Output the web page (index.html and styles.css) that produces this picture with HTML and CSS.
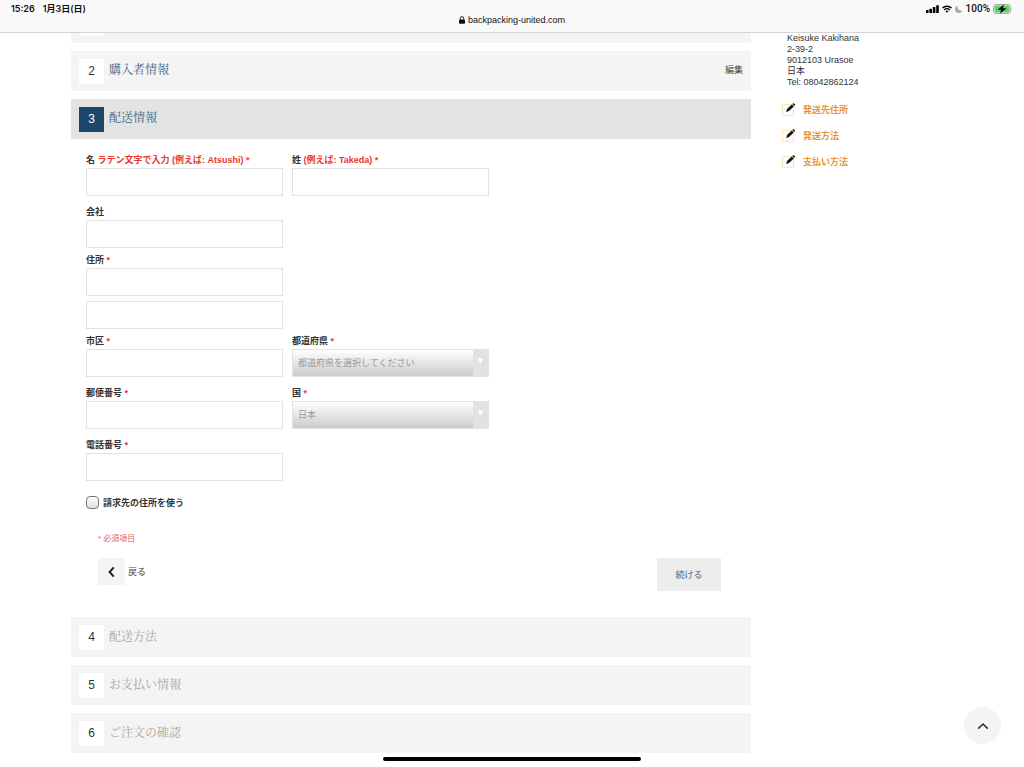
FILE: index.html
```html
<!DOCTYPE html>
<html lang="ja">
<head>
    <meta charset="UTF-8">
    <meta name="viewport" content="width=device-width, initial-scale=1">
    <title>backpacking-united.com</title>
    <link rel="stylesheet" href="styles.css">
</head>
<body>
    <header class="browser-bar">
        <div class="status-left">
            <span>15:26</span>
            <span>1月3日(日)</span>
        </div>
        <div class="address">
            <svg width="6" height="8" viewBox="0 0 6 8"><rect x="0" y="3.4" width="6" height="4.4" rx="0.8" fill="#111"/><path d="M1.3 3.8V2.3a1.7 1.7 0 0 1 3.4 0v1.5" fill="none" stroke="#111" stroke-width="0.9"/></svg>
            <span>backpacking-united.com</span>
        </div>
        <div class="status-right">
            <svg width="13" height="8" viewBox="0 0 13 8" fill="#000"><rect x="0" y="5" width="2.6" height="3" rx="0.6"/><rect x="3.4" y="3.7" width="2.6" height="4.3" rx="0.6"/><rect x="6.8" y="2" width="2.6" height="6" rx="0.6"/><rect x="10.2" y="0.2" width="2.6" height="7.8" rx="0.6"/></svg>
            <svg width="10" height="8" viewBox="0 0 10 8" fill="none" stroke="#000" stroke-width="1.4"><path d="M0.5 3.1a6.4 6.4 0 0 1 9 0M2.2 4.9a4 4 0 0 1 5.6 0"/><path d="M5 7.8 3.5 6.2a2.2 2.2 0 0 1 3 0z" fill="#000" stroke="none"/></svg>
            <svg width="8" height="8" viewBox="0 0 8 8"><path d="M2.6 0.6A3.8 3.8 0 1 0 7.4 5.4 3.9 3.9 0 0 1 2.6 0.6z" fill="#aaa"/></svg>
            <span>100%</span>
            <svg width="20" height="10" viewBox="0 0 20 10"><rect x="0.5" y="0.5" width="17" height="9" rx="2.6" fill="#e8e8e8" stroke="#aaa"/><rect x="1.6" y="1.6" width="14.8" height="6.8" rx="1.6" fill="#5fd068"/><path d="M18.6 3.4q1.2 1.6 0 3.2z" fill="#aaa"/><path d="M11 0.4 4.6 5.8h3.6L7 9.6l6.6-5.4H9.8z" fill="#000"/></svg>
        </div>
    </header>

    <main class="page">
        <div class="checkout">
            <section class="step">
                <span class="step-number">1</span>
            </section>
            <section class="step done">
                <span class="step-number">2</span>
                <h2>購入者情報</h2>
                <a href="#" class="edit">編集</a>
            </section>
            <section class="step active">
                <span class="step-number">3</span>
                <h2>配送情報</h2>
            </section>

            <form class="shipping">
                <div class="fields">
                    <div class="row">
                        <div class="field">
                            <label for="firstname">名 <em>ラテン文字で入力 (例えば: Atsushi) *</em></label>
                            <input type="text" id="firstname">
                        </div>
                        <div class="field">
                            <label for="lastname">姓 <em>(例えば: Takeda) *</em></label>
                            <input type="text" id="lastname">
                        </div>
                    </div>
                    <div class="row tight">
                        <div class="field">
                            <label for="company">会社</label>
                            <input type="text" id="company">
                        </div>
                    </div>
                    <div class="row tight">
                        <div class="field">
                            <label for="street1">住所 <em>*</em></label>
                            <input type="text" id="street1">
                            <input type="text" id="street2" class="second-line" aria-label="住所 2">
                        </div>
                    </div>
                    <div class="row">
                        <div class="field">
                            <label for="city">市区 <em>*</em></label>
                            <input type="text" id="city">
                        </div>
                        <div class="field">
                            <label for="region">都道府県 <em>*</em></label>
                            <div class="select">
                                <select id="region">
                                    <option>都道府県を選択してください</option>
                                </select>
                            </div>
                        </div>
                    </div>
                    <div class="row">
                        <div class="field">
                            <label for="postcode">郵便番号 <em>*</em></label>
                            <input type="text" id="postcode">
                        </div>
                        <div class="field">
                            <label for="country">国 <em>*</em></label>
                            <div class="select">
                                <select id="country">
                                    <option>日本</option>
                                </select>
                            </div>
                        </div>
                    </div>
                    <div class="row">
                        <div class="field">
                            <label for="telephone">電話番号 <em>*</em></label>
                            <input type="text" id="telephone">
                        </div>
                    </div>
                    <div class="same-address">
                        <input type="checkbox" id="same">
                        <label for="same">請求先の住所を使う</label>
                    </div>
                </div>

                <div class="form-footer">
                    <p class="required">* 必須項目</p>
                    <div class="buttons">
                        <a href="#" class="back">
                            <span class="back-icon"><svg width="8" height="12" viewBox="0 0 8 12"><path d="M5.8 1.4 1.6 6l4.2 4.6" fill="none" stroke="#222" stroke-width="2"/></svg></span>
                            戻る
                        </a>
                        <button type="button" class="continue">続ける</button>
                    </div>
                </div>
            </form>

            <section class="step">
                <span class="step-number">4</span>
                <h2>配送方法</h2>
            </section>
            <section class="step">
                <span class="step-number">5</span>
                <h2>お支払い情報</h2>
            </section>
            <section class="step">
                <span class="step-number">6</span>
                <h2>ご注文の確認</h2>
            </section>
        </div>

        <aside class="progress">
            <address>
                Keisuke Kakihana<br>
                2-39-2<br>
                9012103 Urasoe<br>
                日本<br>
                Tel: 08042862124
            </address>
            <ul>
                <li><a href="#"><svg width="14" height="14" viewBox="0 0 14 14"><rect x="0.5" y="1.5" width="11" height="11" fill="#fffdf8" stroke="#fae3c0"/><path d="M4.2 8.9 5 6 9.8 1.4 11.8 3.4 7 8z" fill="#111"/><path d="M10.4 0.9 11.4 0 13.2 1.8 12.3 2.9z" fill="#111"/></svg>発送先住所</a></li>
                <li><a href="#"><svg width="14" height="14" viewBox="0 0 14 14"><rect x="0.5" y="1.5" width="11" height="11" fill="#fffdf8" stroke="#fae3c0"/><path d="M4.2 8.9 5 6 9.8 1.4 11.8 3.4 7 8z" fill="#111"/><path d="M10.4 0.9 11.4 0 13.2 1.8 12.3 2.9z" fill="#111"/></svg>発送方法</a></li>
                <li><a href="#"><svg width="14" height="14" viewBox="0 0 14 14"><rect x="0.5" y="1.5" width="11" height="11" fill="#fffdf8" stroke="#fae3c0"/><path d="M4.2 8.9 5 6 9.8 1.4 11.8 3.4 7 8z" fill="#111"/><path d="M10.4 0.9 11.4 0 13.2 1.8 12.3 2.9z" fill="#111"/></svg>支払い方法</a></li>
            </ul>
        </aside>
    </main>

    <button type="button" class="to-top" aria-label="上へ">
        <svg width="12" height="8" viewBox="0 0 12 8"><path d="M1.2 6.6 6 2l4.8 4.6" fill="none" stroke="#333" stroke-width="1.6"/></svg>
    </button>
    <div class="home-indicator"></div>
</body>
</html>
```
FILE: styles.css
```css
* {
    box-sizing: border-box;
}

body {
    margin: 0;
    background-color: #fff;
    color: #333;
    font-family: "Liberation Sans", "Noto Sans CJK JP", sans-serif;
    font-size: 9px;
}

a {
    color: inherit;
    text-decoration: none;
}

svg {
    display: block;
    flex: none;
}

/* Browser bar */
.browser-bar {
    position: fixed;
    top: 0;
    left: 0;
    right: 0;
    z-index: 10;
    height: 33px;
    padding: 0 11px;
    display: grid;
    grid-template-columns: 1fr auto 1fr;
    background-color: #f9f9f9;
    border-bottom: 1px solid #d4d4d4;
    color: #111;
    font-family: Inter, "Noto Sans CJK JP", sans-serif;
    line-height: 12px;
}

.status-left,
.status-right {
    display: flex;
    align-items: center;
    align-self: start;
    padding-top: 3px;
    height: 15px;
    font-weight: 600;
}

.status-left {
    gap: 8px;
}

.status-right {
    justify-content: flex-end;
    gap: 3px;
    font-family: Roboto, sans-serif;
    font-size: 10px;
    font-weight: 500;
}

.address {
    display: flex;
    align-items: center;
    align-self: start;
    gap: 3px;
    padding-top: 14px;
    font-family: "Liberation Sans", sans-serif;
}

/* Page */
.page {
    display: grid;
    grid-template-columns: 1fr 171px;
    gap: 31px;
    padding: 3px 71px 0;
}

.step {
    display: flex;
    align-items: center;
    gap: 5px;
    height: 40px;
    margin-bottom: 8px;
    padding: 0 8px;
    background-color: #f4f4f4;
}

.step-number {
    width: 25px;
    height: 25px;
    background-color: #fff;
    font-size: 12px;
    line-height: 25px;
    text-align: center;
}

.step h2 {
    margin: 0;
    padding-bottom: 3px;
    color: #a6a6a6;
    font-family: "Noto Serif CJK JP", "Noto Sans CJK JP", serif;
    font-size: 12px;
    font-weight: 400;
    line-height: 18px;
}

.step.done h2,
.step.active h2 {
    padding-bottom: 4px;
    color: #41637f;
}

.step.active {
    margin-bottom: 0;
    background-color: #e3e3e3;
}

.step.active .step-number {
    background-color: #1d466b;
    color: #fff;
}

.edit {
    margin-left: auto;
    padding-bottom: 4px;
    color: #444;
}

/* Shipping form */
.fields {
    padding: 13px 15px 0;
}

.row {
    display: grid;
    grid-template-columns: 197px 197px;
    gap: 9px;
    margin-bottom: 8px;
}

.row.tight {
    margin-bottom: 4px;
}

.field label {
    display: block;
    height: 16px;
    font-weight: bold;
    line-height: 16px;
    white-space: nowrap;
}

.field em {
    color: #e8382e;
    font-style: normal;
}

.field input,
.select select {
    display: block;
    width: 100%;
    height: 28px;
    padding: 0 5px;
    border: 1px solid #e2e2e2;
    border-radius: 0;
    background-color: #fff;
    font-family: inherit;
    font-size: 9px;
}

.field .second-line {
    margin-top: 5px;
}

.select {
    position: relative;
}

.select select {
    appearance: none;
    background: linear-gradient(#fff, #ccc);
    color: #999;
}

.select::after {
    content: "▼";
    position: absolute;
    top: 1px;
    right: 1px;
    bottom: 1px;
    width: 15px;
    background-color: #e2e2e2;
    color: #fff;
    font-family: "DejaVu Sans", sans-serif;
    font-size: 7px;
    line-height: 22px;
    text-align: center;
    pointer-events: none;
}

.same-address {
    display: flex;
    align-items: center;
    gap: 4px;
    height: 16px;
    margin-top: 13px;
    font-weight: bold;
}

.same-address input {
    appearance: none;
    width: 13px;
    height: 13px;
    margin: 0;
    border: 1px solid #777;
    border-radius: 4px;
    background: linear-gradient(#fff, #ddd);
}

.form-footer {
    padding: 21px 30px 26px 27px;
}

.required {
    margin: 0 0 11px;
    color: #e26068;
    font-size: 8px;
    line-height: 16px;
}

.buttons {
    display: flex;
    align-items: flex-start;
    justify-content: space-between;
}

.back {
    display: flex;
    align-items: center;
    gap: 3px;
    color: #444;
}

.back-icon {
    display: flex;
    align-items: center;
    justify-content: center;
    width: 27px;
    height: 27px;
    background-color: #f4f4f4;
}

.continue {
    min-width: 64px;
    height: 33px;
    padding: 0 18px;
    border: 0;
    background-color: #ededee;
    color: #3f6a8d;
    font-family: inherit;
    font-size: 9px;
}

/* Sidebar */
.progress {
    padding-top: 30px;
}

.progress address {
    padding-left: 5px;
    font-style: normal;
    line-height: 11px;
}

.progress ul {
    display: grid;
    gap: 10px;
    margin: 14px 0 0;
    padding: 0;
    list-style: none;
}

.progress li a {
    display: flex;
    align-items: center;
    gap: 7px;
    color: #e5962f;
    font-weight: bold;
    line-height: 16px;
}

.to-top {
    position: fixed;
    right: 23px;
    bottom: 23px;
    display: flex;
    align-items: center;
    justify-content: center;
    width: 37px;
    height: 37px;
    padding: 0;
    border: 0;
    border-radius: 50%;
    background-color: #f4f4f4;
}

.home-indicator {
    position: fixed;
    bottom: 6px;
    left: 50%;
    width: 258px;
    height: 4px;
    border-radius: 2px;
    background-color: #000;
    transform: translateX(-50%);
}
```
